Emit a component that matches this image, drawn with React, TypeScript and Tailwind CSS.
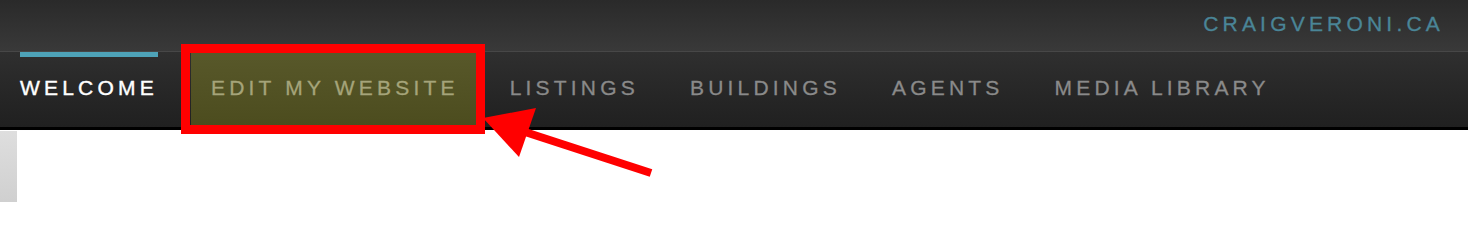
import React from "react";

const items = ["LISTINGS", "BUILDINGS", "AGENTS", "MEDIA LIBRARY"];

export default function App() {
  return (
    <div
      className="relative w-[1468px] h-[202px] overflow-hidden bg-white"
      style={{ fontFamily: '"Liberation Sans", Arial, sans-serif' }}
    >
      {/* top bar */}
      <div className="h-[51px] bg-gradient-to-b from-[#2a2a2a] to-[#393939] flex justify-end pr-6 pt-3">
        <span className="text-[21px] leading-6 tracking-[0.2em] text-[#4a8597] [-webkit-text-stroke:0.3px]">CRAIGVERONI.CA</span>
      </div>
      <div className="h-px bg-[#474747]" />
      {/* nav */}
      <nav className="h-[78px] bg-gradient-to-b from-[#2f2f2f] to-[#202020] border-b-[3px] border-black flex gap-[11px]">
        <div className="pl-5 pr-[22px] flex flex-col items-start">
          <div className="flex flex-col">
            <div className="h-[5px] bg-[#4ea3b8]" />
            <span className="mt-[19px] text-[21px] leading-6 tracking-[0.2em] text-white [-webkit-text-stroke:0.4px]">WELCOME</span>
          </div>
        </div>
        <div className="px-5 flex flex-col bg-gradient-to-b from-[#58582a] to-[#4c4c1e]">
          <span className="mt-6 text-[21px] leading-6 tracking-[0.2em] text-[#a5a47a] [-webkit-text-stroke:0.3px]">EDIT MY WEBSITE</span>
        </div>
        {items.map((t) => (
          <div key={t} className="px-5 flex flex-col">
            <span className="mt-6 text-[21px] leading-6 tracking-[0.2em] text-[#8a8a8a] [-webkit-text-stroke:0.3px]">{t}</span>
          </div>
        ))}
      </nav>
      {/* page content */}
      <div className="pt-px">
        <div className="w-[17px] h-[80px] bg-gradient-to-b from-[#dedede] to-[#cecece]" />
      </div>

      {/* annotation: red box */}
      <div className="absolute left-[181px] top-[44px] w-[304px] h-[90px] border-[9px] border-[#ff0000]" />
      {/* annotation: arrow */}
      <svg className="absolute left-0 top-0" width="1468" height="202" viewBox="0 0 1468 202">
        <line x1="522" y1="131" x2="651" y2="173" stroke="#ff0000" strokeWidth="8" />
        <polygon points="483,118 536,108 519,157" fill="#ff0000" />
      </svg>
    </div>
  );
}
